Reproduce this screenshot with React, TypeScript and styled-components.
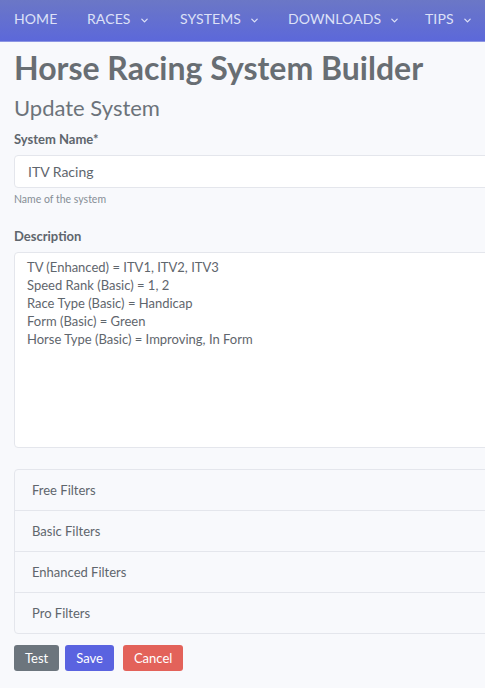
import React from 'react';
import styled, { createGlobalStyle } from 'styled-components';

const GlobalStyle = createGlobalStyle`
    html, body {
        margin: 0;
        padding: 0;
        background: #f8f9fc;
        overflow-x: hidden;
    }
    body {
        font-family: Lato, "Noto Sans", Arial, sans-serif;
        color: #6c757d;
    }
    * { box-sizing: border-box; }
`;

const Page = styled.div`
    width: 540px;
`;

const NavBar = styled.nav`
    height: 42px;
    display: flex;
    align-items: flex-start;
    padding: 11px 14px 0;
    background: linear-gradient(180deg, #6b77c6 0%, #5c68da 100%);
    border-bottom: 1px solid #8c95e3;
`;

const NavItem = styled.a<{ $width: number }>`
    display: flex;
    align-items: center;
    gap: 9px;
    width: ${({ $width }) => $width}px;
    flex: none;
    color: #dde1f7;
    font-size: 14px;
    line-height: 16px;
    text-transform: uppercase;
    text-decoration: none;
    letter-spacing: 0.1px;
`;

const Chevron = styled.svg`
    width: 9px;
    height: 9px;
    margin-top: 2px;
`;

const Main = styled.main`
    padding: 7px 14px 0;
`;

const Title = styled.h1`
    margin: 0;
    font-size: 32px;
    font-weight: 700;
    line-height: 38px;
    color: #686e73;
`;

const Subtitle = styled.h2`
    margin: 7px 0 0;
    font-size: 22px;
    font-weight: 400;
    line-height: 28px;
    color: #6c737a;
`;

const Field = styled.div<{ $gap?: number }>`
    margin-top: ${({ $gap }) => $gap ?? 0}px;
`;

const Label = styled.label`
    display: block;
    font-size: 13px;
    font-weight: 700;
    line-height: 18px;
    color: #5f666d;
    margin-bottom: 7px;
`;

const TextInput = styled.input`
    display: block;
    width: 100%;
    height: 33px;
    padding: 0 13px;
    font-family: inherit;
    font-size: 14px;
    color: #5f666d;
    background: #ffffff;
    border: 1px solid #e4e6ec;
    border-radius: 4px;
    outline: none;
`;

const Help = styled.small`
    display: block;
    margin-top: 5px;
    font-size: 10.5px;
    color: #868e96;
`;

const TextArea = styled.textarea`
    display: block;
    width: 100%;
    height: 196px;
    padding: 5px 12px;
    font-family: inherit;
    font-size: 13px;
    line-height: 18px;
    color: #5f666d;
    background: #ffffff;
    border: 1px solid #e4e6ec;
    border-radius: 4px;
    resize: none;
    outline: none;
`;

const Accordion = styled.div`
    margin-top: 21px;
    border: 1px solid #e4e6ec;
    border-radius: 4px;
    background: #f8f9fc;
`;

const AccordionHeader = styled.button`
    display: block;
    width: 100%;
    height: 41px;
    padding: 0 17px;
    text-align: left;
    font-family: inherit;
    font-size: 13px;
    color: #5f666d;
    background: transparent;
    border: none;
    border-top: 1px solid #e4e6ec;
    cursor: pointer;

    &:first-child {
        height: 40px;
        border-top: none;
    }
`;

const Actions = styled.div`
    display: flex;
    gap: 6px;
    margin-top: 11px;
`;

const Button = styled.button<{ $color: string; $spaced?: boolean }>`
    height: 26px;
    padding: 0 11px;
    margin-left: ${({ $spaced }) => ($spaced ? '3px' : '0')};
    font-family: inherit;
    font-size: 13px;
    color: #ffffff;
    background: ${({ $color }) => $color};
    border: none;
    border-radius: 3px;
    cursor: pointer;
`;

const navItems = [
    { label: 'Home', width: 73, caret: false },
    { label: 'Races', width: 93, caret: true },
    { label: 'Systems', width: 108, caret: true },
    { label: 'Downloads', width: 137, caret: true },
    { label: 'Tips', width: 60, caret: true },
];

const description = [
    'TV (Enhanced) = ITV1, ITV2, ITV3',
    'Speed Rank (Basic) = 1, 2',
    'Race Type (Basic) = Handicap',
    'Form (Basic) = Green',
    'Horse Type (Basic) = Improving, In Form',
].join('\n');

const filters = ['Free Filters', 'Basic Filters', 'Enhanced Filters', 'Pro Filters'];

export default function App() {
    return (
        <Page>
            <GlobalStyle />
            <NavBar>
                {navItems.map((item) => (
                    <NavItem key={item.label} href="#" $width={item.width}>
                        {item.label}
                        {item.caret && (
                            <Chevron viewBox="0 0 10 10" fill="none" stroke="currentColor" strokeWidth="1.4" strokeLinecap="round" strokeLinejoin="round">
                                <path d="M2 3.5 L5 6.5 L8 3.5" />
                            </Chevron>
                        )}
                    </NavItem>
                ))}
            </NavBar>
            <Main>
                <Title>Horse Racing System Builder</Title>
                <Subtitle>Update System</Subtitle>
                <Field $gap={8}>
                    <Label>System Name*</Label>
                    <TextInput defaultValue="ITV Racing" />
                    <Help>Name of the system</Help>
                </Field>
                <Field $gap={22}>
                    <Label>Description</Label>
                    <TextArea defaultValue={description} />
                </Field>
                <Accordion>
                    {filters.map((f) => (
                        <AccordionHeader key={f}>{f}</AccordionHeader>
                    ))}
                </Accordion>
                <Actions>
                    <Button $color="#6c757d">Test</Button>
                    <Button $color="#5a63e0">Save</Button>
                    <Button $color="#e3625a" $spaced>Cancel</Button>
                </Actions>
            </Main>
        </Page>
    );
}
